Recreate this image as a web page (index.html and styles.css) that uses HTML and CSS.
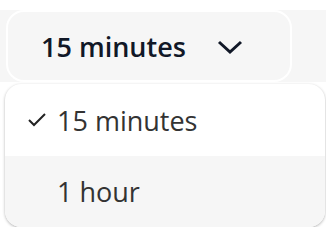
FILE: index.html
```html
<!DOCTYPE html>
<html lang="en">
<head>
    <meta charset="UTF-8">
    <title>Interval select</title>
    <link rel="stylesheet" href="styles.css">
</head>
<body>
    <div class="toolbar">
        <button class="select-btn" type="button">
            <span>15 minutes</span>
            <svg class="chevron" width="26" height="16" viewBox="0 0 26 16">
                <polyline points="2,3 13,13 24,3" fill="none" stroke="#111827" stroke-width="3"/>
            </svg>
        </button>
    </div>

    <!-- opciones del desplegable -->
    <ul class="menu">
        <li class="menu-item selected">
            <svg class="check" width="18" height="14" viewBox="0 0 18 14">
                <polyline points="1,7 6,12 17,1" fill="none" stroke="#222" stroke-width="2"/>
            </svg>
            <span>15 minutes</span>
        </li>
        <li class="menu-item hover">
            <span class="check"></span>
            <span>1 hour</span>
        </li>
    </ul>
</body>
</html>
```

FILE: styles.css
```css
body {
    margin: 0;
    background-color: #fff;
    font-family: 'Open Sans', 'Noto Sans', sans-serif;
}

.toolbar {
    margin-top: 10px;
    height: 72px;
    padding-left: 6px;
    background-color: #f6f6f6;
}

.select-btn {
    display: flex;
    align-items: center;
    gap: 31px;
    box-sizing: border-box;
    width: 286px;
    height: 72px;
    padding: 0 0 0 33px;
    background-color: #f6f6f6;
    border: 2px solid #fff;
    border-radius: 18px;
    font-family: inherit;
    font-size: 27px;
    font-weight: 600;
    color: #111827;
    cursor: pointer;
}

.chevron {
    display: block;
    margin-top: 2px;
}

.menu {
    list-style: none;
    margin: 2px 1px 0 5px;
    padding: 0;
    border-radius: 16px;
    overflow: hidden;
    background-color: #fff;
    box-shadow: 0 1px 3px rgba(0,0,0,0.3);
}

.menu-item {
    display: flex;
    align-items: center;
    gap: 11px;
    height: 72px;
    padding-left: 23px;
    font-size: 27px;
    color: #333;
}

.menu-item.hover {
    height: 71px;
    background-color: #f6f6f6;
}

.check {
    display: block;
    width: 18px;
    flex-shrink: 0;
}
```
